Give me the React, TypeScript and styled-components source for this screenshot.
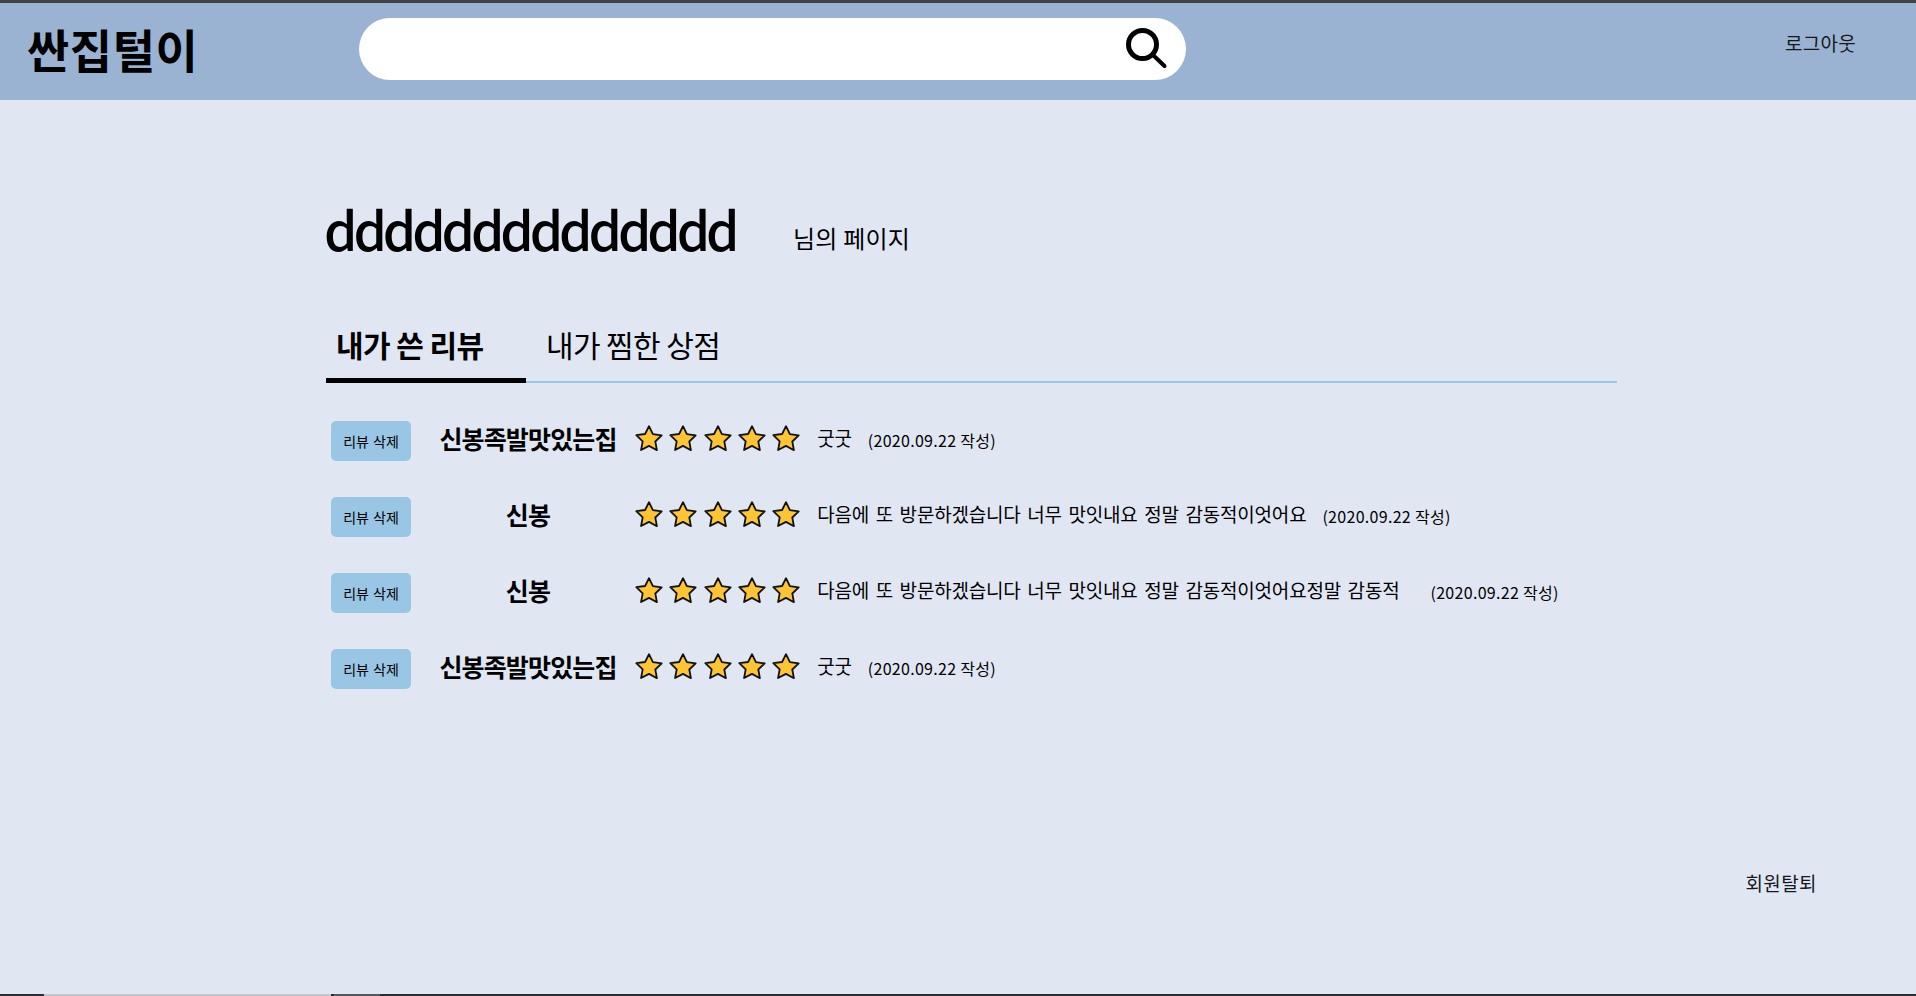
import React from 'react'
import styled, { createGlobalStyle } from 'styled-components'

const GlobalStyle = createGlobalStyle`
  html, body {
    margin: 0;
    padding: 0;
    height: 100%;
    overflow: hidden;
  }
  body {
    font-family: 'Noto Sans CJK KR', 'Noto Sans', sans-serif;
    color: #000;
    background: #e1e7f2;
  }
`

interface Review {
  id: number
  shop: string
  comment: string
  wide?: boolean
}

const reviews: Review[] = [
  { id: 1, shop: '신봉족발맛있는집', comment: '굿굿' },
  { id: 2, shop: '신봉', comment: '다음에 또 방문하겠습니다 너무 맛잇내요 정말 감동적이엇어요' },
  { id: 3, shop: '신봉', comment: '다음에 또 방문하겠습니다 너무 맛잇내요 정말 감동적이엇어요정말 감동적', wide: true },
  { id: 4, shop: '신봉족발맛있는집', comment: '굿굿' },
]

const Star = () => (
  <svg width="30" height="28" viewBox="0 0 30 28">
    <path
      d="M15 2.2l3.9 8 8.8 1.2-6.4 6.1 1.6 8.7L15 21.9l-7.9 4.1 1.6-8.7-6.4-6.1 8.8-1.2z"
      fill="#fdc433"
      stroke="#111"
      strokeWidth="1.8"
      strokeLinejoin="round"
    />
  </svg>
)

const SearchIcon = () => (
  <svg width="44" height="44" viewBox="0 0 44 44" fill="none" stroke="#000" strokeLinecap="round">
    <circle cx="18.5" cy="17.5" r="14" strokeWidth="5" />
    <path d="M29 28l11.5 11" strokeWidth="4" />
  </svg>
)

const App = () => (
  <Page>
    <GlobalStyle />
    <TopEdge />
    <Header>
      <Logo>싼집털이</Logo>
      <SearchBox>
        <SearchIcon />
      </SearchBox>
      <Logout>로그아웃</Logout>
    </Header>
    <Main>
      <TitleRow>
        <UserName>dddddddddddddd</UserName>
        <TitleSuffix>님의 페이지</TitleSuffix>
      </TitleRow>
      <Tabs>
        <Tab active>내가 쓴 리뷰</Tab>
        <Tab>내가 찜한 상점</Tab>
      </Tabs>
      <List>
        {reviews.map((review) => (
          <Row key={review.id}>
            <DeleteButton>리뷰 삭제</DeleteButton>
            <ShopName>{review.shop}</ShopName>
            <Stars>
              {[0, 1, 2, 3, 4].map((n) => (
                <Star key={n} />
              ))}
            </Stars>
            <Comment wide={review.wide}>{review.comment}</Comment>
            <DateText>(2020.09.22 작성)</DateText>
          </Row>
        ))}
      </List>
      <LeaveRow>
        <Leave>회원탈퇴</Leave>
      </LeaveRow>
    </Main>
    <BottomEdge>
      <EdgeDark width={44} />
      <EdgeLight />
      <EdgeDark width={3} />
      <EdgeGrey />
      <EdgeDark />
    </BottomEdge>
  </Page>
)

export default App

const Page = styled.div`
  display: flex;
  flex-direction: column;
  width: 1916px;
  height: 996px;
`

const TopEdge = styled.div`
  flex: none;
  height: 3px;
  background: #3f4145;
`

const Header = styled.header`
  flex: none;
  display: flex;
  align-items: flex-start;
  height: 97px;
  background: #9ab3d2;
`

const Logo = styled.div`
  width: 359px;
  box-sizing: border-box;
  padding: 17px 0 0 27px;
  font-size: 46px;
  font-weight: 700;
  line-height: 56px;
  letter-spacing: 0.5px;
`

const SearchBox = styled.div`
  display: flex;
  align-items: center;
  justify-content: flex-end;
  box-sizing: border-box;
  width: 827px;
  height: 62px;
  margin-top: 15px;
  padding-right: 18px;
  background: #fff;
  border-radius: 31px;
`

const Logout = styled.div`
  margin: 28px 0 0 599px;
  font-size: 19px;
  line-height: 24px;
  letter-spacing: 0.3px;
  color: #16181c;
`

const Main = styled.main`
  flex: 1;
  display: flex;
  flex-direction: column;
  padding: 0 99px 0 326px;
`

const TitleRow = styled.div`
  display: flex;
  align-items: flex-start;
  margin-top: 94px;
`

const UserName = styled.div`
  width: 469px;
  margin-left: -2px;
  font-size: 53px;
  font-weight: 500;
  line-height: 68px;
  letter-spacing: -4px;
`

const TitleSuffix = styled.div`
  margin-top: 28px;
  font-size: 24px;
  line-height: 32px;
  letter-spacing: 0.2px;
`

const Tabs = styled.div`
  display: flex;
  width: 1291px;
  height: 67px;
  margin-top: 52px;
  border-bottom: 2px solid #9ac6e6;
`

const Tab = styled.div<{ active?: boolean }>`
  box-sizing: border-box;
  width: ${({ active }) => (active ? '200px' : 'auto')};
  height: 69px;
  padding: 10px ${({ active }) => (active ? '0 0 10px' : '0 0 20px')};
  font-size: 30px;
  font-weight: ${({ active }) => (active ? 700 : 400)};
  line-height: 40px;
  letter-spacing: -0.6px;
  border-bottom: ${({ active }) => (active ? '5px solid #000' : 'none')};
`

const List = styled.div`
  display: flex;
  flex-direction: column;
  gap: 36px;
  margin-top: 38px;
`

const Row = styled.div`
  display: flex;
  align-items: center;
  height: 40px;
  padding-left: 5px;
`

const DeleteButton = styled.button`
  flex: none;
  width: 80px;
  height: 40px;
  padding: 0;
  border: none;
  border-radius: 5px;
  background: #9ac6e6;
  color: #000;
  font-family: inherit;
  font-size: 14px;
  font-weight: 400;
  word-spacing: 1px;
`

const ShopName = styled.div`
  flex: none;
  width: 212px;
  margin: 0 0 6px 11px;
  font-size: 25px;
  font-weight: 700;
  line-height: 32px;
  letter-spacing: -0.85px;
  text-align: center;
  white-space: nowrap;
`

const Stars = styled.div`
  display: flex;
  flex: none;
  gap: 4.3px;
  margin: 0 16px 6px 0;
`

const Comment = styled.div<{ wide?: boolean }>`
  flex: none;
  margin: 0 ${({ wide }) => (wide ? '31px' : '16px')} 6px 0;
  font-size: 19px;
  line-height: 24px;
  letter-spacing: -0.2px;
  word-spacing: 2.6px;
`

const DateText = styled.div`
  flex: none;
  margin-bottom: 2px;
  font-size: 16px;
  line-height: 20px;
  letter-spacing: 0.3px;
`

const LeaveRow = styled.div`
  display: flex;
  justify-content: flex-end;
  margin-top: auto;
  margin-bottom: 99px;
`

const Leave = styled.div`
  font-size: 19px;
  line-height: 24px;
  letter-spacing: 0.4px;
  color: #16181c;
`

const BottomEdge = styled.div`
  flex: none;
  display: flex;
  height: 2px;
`

const EdgeDark = styled.div<{ width?: number }>`
  flex: ${({ width }) => (width ? `0 0 ${width}px` : '1')};
  background: #2b2e33;
`

const EdgeLight = styled.div`
  flex: 0 0 287px;
  background: #c4c6c9;
`

const EdgeGrey = styled.div`
  flex: 0 0 46px;
  background: #54575c;
`
